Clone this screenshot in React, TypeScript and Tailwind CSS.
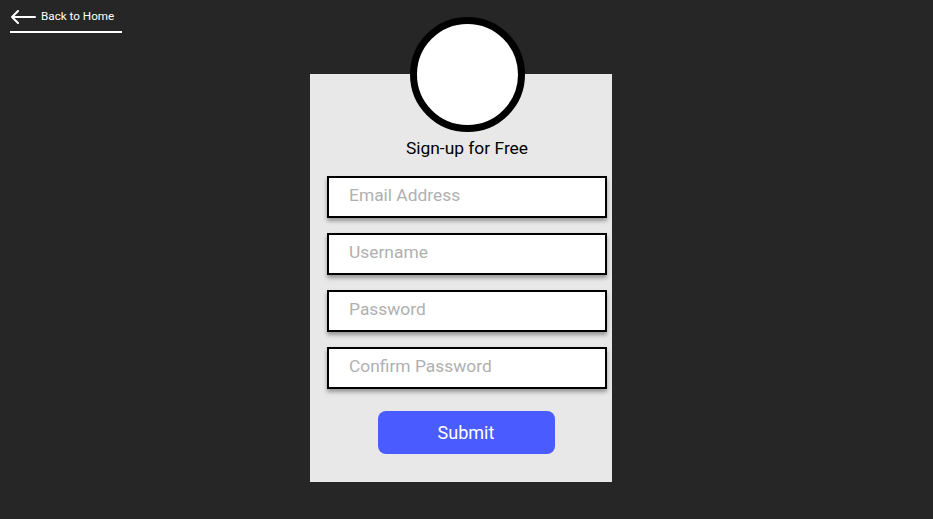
import React from "react";

export default function App() {
  const fields = ["Email Address", "Username", "Password", "Confirm Password"];
  return (
    <div
      className="w-[933px] h-[519px] bg-[#262626] overflow-hidden flex flex-col"
      style={{ fontFamily: "Roboto, 'Liberation Sans', sans-serif" }}
    >
      <div className="pl-[10px] pt-[7px]">
        <a className="inline-flex flex-col w-[112px] cursor-pointer">
          <span className="flex items-center h-[16px]">
            <svg width="26" height="14" viewBox="0 0 26 14" className="mr-[5px] mt-[1px]">
              <path d="M25 7H2M8 1L2 7L8 13" fill="none" stroke="#ffffff" strokeWidth="2" strokeLinecap="round" strokeLinejoin="round" />
            </svg>
            <span className="text-[11.7px] text-white leading-[16px] -mt-[2px]">Back to Home</span>
          </span>
          <span className="mt-[6px] h-[2px] w-[112px] bg-white" />
        </a>
      </div>
      <div className="ml-[310px] mt-[41px] w-[302px] h-[408px] bg-[#e8e8e8] flex flex-col items-center pl-[17px] pr-[5px]">
        <div className="-mt-[57px] w-[115px] h-[115px] rounded-full bg-white border-[7px] border-black shrink-0" />
        <div className="mt-[4px] text-[17.4px] leading-[24px] text-black">Sign-up for Free</div>
        <div className="mt-[16px] flex flex-col gap-[15px] w-[280px]">
          {fields.map((f) => (
            <input
              key={f}
              placeholder={f}
              type={f.includes("Password") ? "password" : "text"}
              className="h-[42px] w-[280px] bg-white border-2 border-black pl-[20px] pb-[3px] text-[17.4px] text-black placeholder:text-[#b0b0b0] outline-none shadow-[0_3px_4px_rgba(0,0,0,0.35)]"
            />
          ))}
        </div>
        <button className="mt-[22px] -ml-[2px] w-[177px] h-[43px] rounded-[8px] bg-[#4a5cff] text-white text-[18px]">
          Submit
        </button>
      </div>
    </div>
  );
}
